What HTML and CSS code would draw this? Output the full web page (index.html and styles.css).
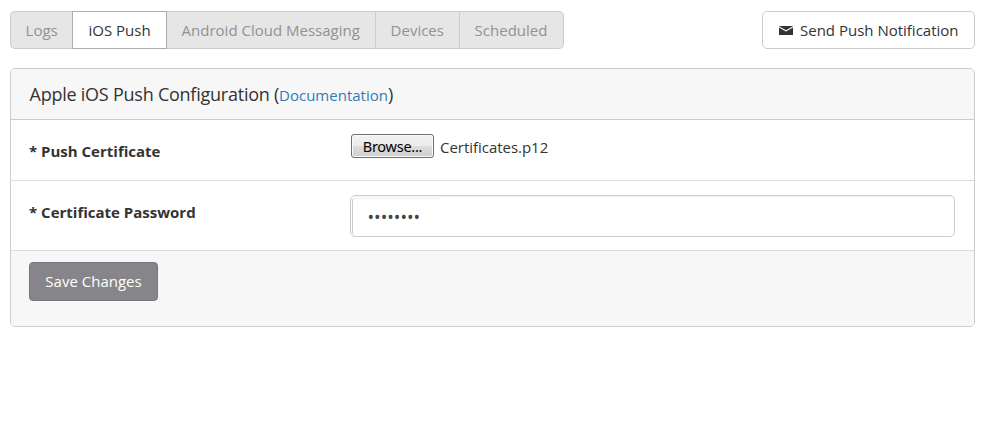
FILE: index.html
```html
<!DOCTYPE html>
<html lang="en">
<head>
<meta charset="utf-8">
<title>Push Notifications</title>
<link rel="stylesheet" href="styles.css">
</head>
<body>
<header class="toolbar">
  <nav class="tabs">
    <a class="tab tab-logs">Logs</a>
    <a class="tab tab-ios active">iOS Push</a>
    <a class="tab tab-android">Android Cloud Messaging</a>
    <a class="tab tab-devices">Devices</a>
    <a class="tab tab-scheduled">Scheduled</a>
  </nav>
  <button class="send"><svg class="mail" viewBox="0 0 14 9"><path d="M0 0h14v.3L7 4.2 0 .3z"/><path d="M0 1.5l7 4 7-4V9H0z"/></svg><span>Send Push Notification</span></button>
</header>
<main class="panel">
  <h1 class="panel-head">Apple iOS Push Configuration (<a class="doc">Documentation</a>)</h1>
  <div class="row row-file">
    <div class="label">* Push Certificate</div>
    <div class="file"><button class="browse">Browse...</button><span class="filename">Certificates.p12</span></div>
  </div>
  <div class="row row-pass">
    <div class="label">* Certificate Password</div>
    <div class="password"><div class="inner"><span class="dots">••••••••</span></div></div>
  </div>
  <footer class="panel-foot"><button class="save">Save Changes</button></footer>
</main>
</body>
</html>
```
FILE: styles.css
```css
* { box-sizing: border-box; }
body {
  margin: 0;
  padding: 11px 16px 0 10px;
  background: #fff;
  color: #333;
  font: 15px/20px "Open Sans", sans-serif;
}
button { margin: 0; padding: 0; font: inherit; color: inherit; }
.toolbar { display: flex; justify-content: space-between; height: 38px; }
.tabs { display: flex; }
.tab {
  height: 38px;
  padding: 8px 0 0 14.6px;
  background: #e6e6e6;
  border: 1px solid #ccc;
  border-left: 0;
  color: #929292;
  white-space: nowrap;
}
.tab-logs { width: 62px; border-left: 1px solid #ccc; border-right: 0; border-radius: 5px 0 0 5px; }
.tab-ios { width: 95px; padding-left: 15.5px; }
.tab-android { width: 209px; }
.tab-devices { width: 84px; }
.tab-scheduled { width: 104px; border-radius: 0 5px 5px 0; }
.tab.active { background: #fff; border: 1px solid #adadad; color: #333; }
.send {
  display: flex;
  align-items: center;
  width: 213px;
  padding-left: 15.5px;
  background: #fff;
  border: 1px solid #ccc;
  border-radius: 5px;
  white-space: nowrap;
}
.mail { width: 14px; height: 9px; margin-right: 7.5px; fill: #333; }
.panel {
  height: 259px;
  margin-top: 19px;
  border: 1px solid #ccc;
  border-radius: 5px;
  overflow: hidden;
}
.panel-head {
  height: 51px;
  margin: 0;
  padding: 13px 18.5px 0;
  background: #f7f7f7;
  border-bottom: 1px solid #ccc;
  font-size: 18px;
  font-weight: 400;
  line-height: 24px;
  letter-spacing: -0.24px;
}
.doc { color: #337ab7; font-size: 15px; letter-spacing: 0; }
.row { display: grid; grid-template-columns: 321px 605px; padding-left: 18px; border-bottom: 1px solid #ddd; }
.row-file { height: 61px; }
.row-pass { height: 70px; }
.label { padding-top: 21px; font-weight: 700; }
.file { display: flex; align-items: flex-start; padding: 14px 0 0 1px; }
.browse {
  width: 83px;
  height: 24px;
  border: 1px solid #707070;
  border-radius: 3px;
  background: linear-gradient(#f2f2f2 0, #ebebeb 50%, #dddddd 50%, #cfcfcf 100%);
  box-shadow: inset 0 0 0 1px #fafafa;
  color: #000;
  font: 14.5px/20px "Noto Sans", sans-serif;
  letter-spacing: -0.25px;
}
.filename { margin: 3px 0 0 6px; letter-spacing: -0.03px; }
.password {
  height: 42px;
  margin-top: 14px;
  padding: 2px 0 0 1px;
  border: 1px solid #ccc;
  border-radius: 5px;
  box-shadow: inset 0 1px 1px rgba(0, 0, 0, .06);
}
.inner {
  width: 87px;
  height: 37px;
  padding: 8px 0 0 14.5px;
  border-left: 1px solid #ccc;
  border-top: 1px solid #eee;
  border-radius: 3px 0 0 3px;
}
.dots { color: #444; font-size: 17.5px; }
.panel-foot { height: 76px; padding: 11px 18px; background: #f7f7f7; }
.save {
  width: 129px;
  height: 39px;
  padding-bottom: 2px;
  background: #868589;
  border: 1px solid #77767b;
  border-radius: 4px;
  color: #fff;
}
```
